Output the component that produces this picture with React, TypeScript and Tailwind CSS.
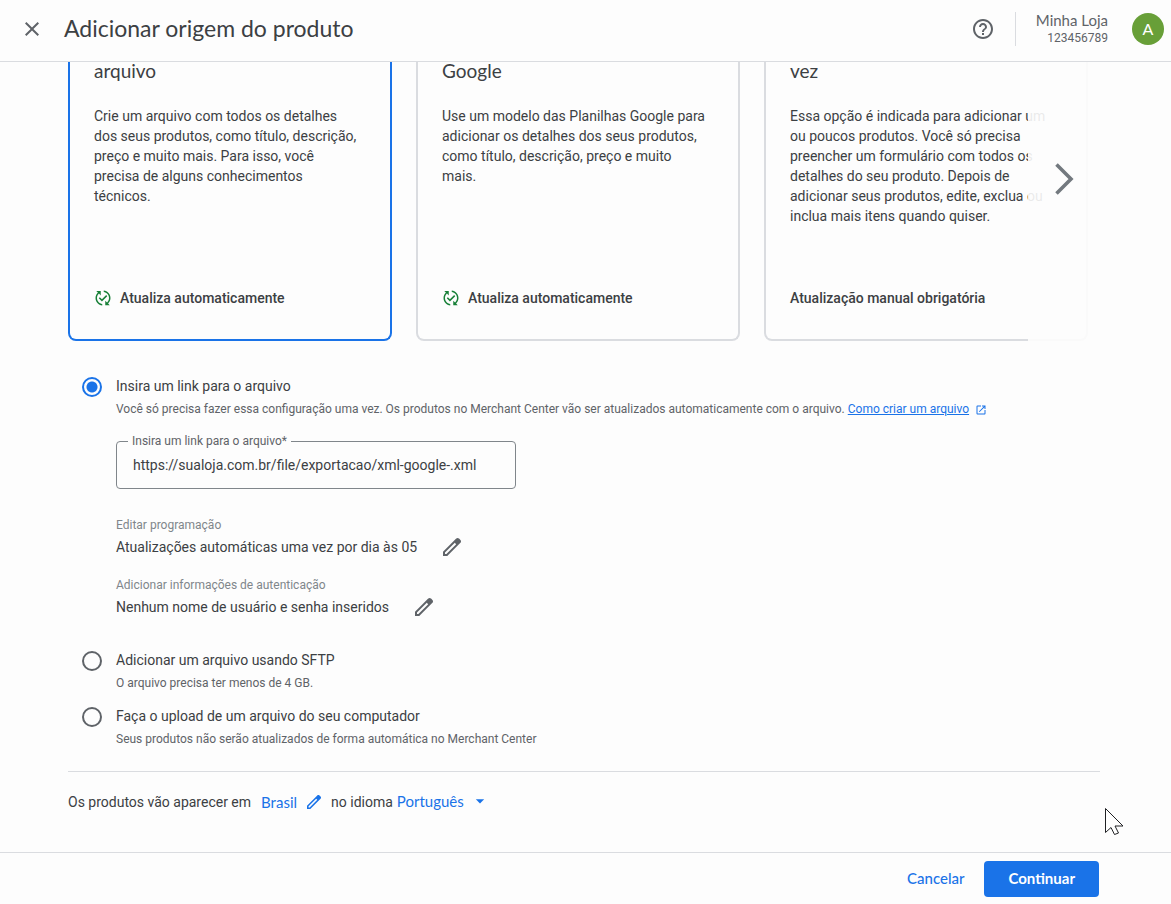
import React, { useState } from 'react';
import { MdArrowDropDown, MdClose, MdHelpOutline, MdOpenInNew, MdPublishedWithChanges } from 'react-icons/md';

type Source = 'link' | 'sftp' | 'upload';

interface CardProps {
  title: string;
  text: string;
  status: string;
  auto?: boolean;
  selected?: boolean;
}

const PencilIcon: React.FC<{ className: string }> = ({ className }) => (
  <svg viewBox="120 -840 720 720" fill="currentColor" className={className} aria-hidden="true">
    <path d="M200-200h57l391-391-57-57-391 391v57Zm-80 80v-170l528-527q12-11 26.5-17t30.5-6q16 0 31 6t26 18l55 56q12 11 17.5 26t5.5 30q0 16-5.5 30.5T817-647L290-120H120Zm640-584-56-56 56 56Zm-141 85-28-29 57 57-29-28Z" />
  </svg>
);

const MethodCard: React.FC<CardProps> = ({ title, text, status, auto, selected }) => (
  <article
    className={`flex w-[324px] shrink-0 flex-col rounded-b-lg border-2 border-t-0 px-6 pb-[31px] ${
      selected ? 'border-[#1a73e8]' : 'border-[#dadce0]'
    }`}
  >
    <h2 className="font-['Lato'] text-[19px] leading-[18px] text-[#3c4043]">{title}</h2>
    <p className="mt-[26px] text-sm leading-5 whitespace-pre-line">{text}</p>
    <div className="mt-auto flex items-center gap-2 pt-[62px] text-sm leading-5 font-medium">
      {auto && <MdPublishedWithChanges className="size-[18px] text-[#188038]" />}
      {status}
    </div>
  </article>
);

interface OptionProps {
  id: Source;
  label: string;
  hint: React.ReactNode;
  value: Source;
  onSelect: (value: Source) => void;
  children?: React.ReactNode;
}

const SourceOption: React.FC<OptionProps> = ({ id, label, hint, value, onSelect, children }) => (
  <div className="flex gap-3.5">
    <input
      type="radio"
      id={id}
      name="source"
      checked={value === id}
      onChange={() => onSelect(id)}
      className="mt-px size-5 shrink-0 appearance-none rounded-full border-2 border-[#5f6368] checked:border-[#1a73e8] checked:bg-[radial-gradient(circle,#1a73e8_5px,transparent_6px)]"
    />
    <div className="flex-1">
      <label htmlFor={id} className="block text-sm leading-5">{label}</label>
      <div className="mt-[3px] text-xs leading-5 text-[#5f6368]">{hint}</div>
      {children}
    </div>
  </div>
);

const Setting: React.FC<{ name: string; value: string }> = ({ name, value }) => (
  <div>
    <div className="text-xs leading-5 text-[#80868b]">{name}</div>
    <div className="flex items-center gap-[26px] text-sm leading-6">
      {value}
      <button type="button" aria-label={name} className="text-[#5f6368]">
        <PencilIcon className="size-[18px]" />
      </button>
    </div>
  </div>
);

const App: React.FC = () => {
  const [source, setSource] = useState<Source>('link');
  const [url, setUrl] = useState('https://sualoja.com.br/file/exportacao/xml-google-.xml');

  return (
    <div className="relative flex min-h-screen flex-col bg-[#fdfdfd] font-['Roboto',sans-serif] text-[#3c4043]">
      <header className="flex h-[62px] shrink-0 items-center border-b border-[#dadce0] pr-[7px] pb-1 pl-5">
        <button type="button" aria-label="Fechar" className="text-[#5f6368]">
          <MdClose className="size-6" />
        </button>
        <h1 className="ml-5 flex-1 pb-0.5 font-['Lato'] text-[23px] leading-8">Adicionar origem do produto</h1>
        <button type="button" aria-label="Ajuda" className="mr-5 text-[#5f6368]">
          <MdHelpOutline className="size-6" />
        </button>
        <div className="border-l border-[#dadce0] pl-5 text-right text-[#5f6368]">
          <div className="font-['Lato'] text-[15px] leading-4">Minha Loja</div>
          <div className="pt-0.5 text-xs leading-4">123456789</div>
        </div>
        <button type="button" aria-label="Conta" className="ml-6 size-8 rounded-full bg-[#689f38] font-['Lato'] text-base text-white">
          A
        </button>
      </header>

      <main className="flex-1 pr-[71px] pl-[68px]">
        <section className="relative flex gap-6">
          <MethodCard
            selected
            auto
            title="arquivo"
            text={'Crie um arquivo com todos os detalhes\ndos seus produtos, como título, descrição,\npreço e muito mais. Para isso, você\nprecisa de alguns conhecimentos\ntécnicos.'}
            status="Atualiza automaticamente"
          />
          <MethodCard
            auto
            title="Google"
            text={'Use um modelo das Planilhas Google para\nadicionar os detalhes dos seus produtos,\ncomo título, descrição, preço e muito\nmais.'}
            status="Atualiza automaticamente"
          />
          <MethodCard
            title="vez"
            text={'Essa opção é indicada para adicionar um\nou poucos produtos. Você só precisa\npreencher um formulário com todos os\ndetalhes do seu produto. Depois de\nadicionar seus produtos, edite, exclua ou\ninclua mais itens quando quiser.'}
            status="Atualização manual obrigatória"
          />
          <button
            type="button"
            aria-label="Próximo"
            className="absolute inset-y-0 right-0 flex w-[72px] justify-center bg-[#fdfdfd]/90 pt-[101px] text-[#73797f]"
          >
            <svg viewBox="0 0 20 32" className="h-8 w-5" fill="none" stroke="currentColor" strokeWidth="3.6" aria-hidden="true">
              <path d="M2.5 1.5 17 16 2.5 30.5" />
            </svg>
          </button>
        </section>

        <form id="source-form" className="mt-[35px] flex flex-col gap-[13px] pl-3.5" onSubmit={(e) => e.preventDefault()}>
          <SourceOption
            id="link"
            label="Insira um link para o arquivo"
            value={source}
            onSelect={setSource}
            hint={
              <>
                Você só precisa fazer essa configuração uma vez. Os produtos no Merchant Center vão ser atualizados automaticamente com o arquivo.{' '}
                <a href="#como-criar" className="text-[#1a73e8] underline">Como criar um arquivo</a>
                <MdOpenInNew className="ml-1.5 inline size-3 text-[#1a73e8]" />
              </>
            }
          >
            <div className="relative mt-[22px] w-[400px]">
              <label htmlFor="file-url" className="absolute -top-2 left-3 bg-[#fdfdfd] px-1 text-xs leading-4 text-[#5f6368]">
                Insira um link para o arquivo*
              </label>
              <input
                id="file-url"
                type="text"
                required
                value={url}
                onChange={(e) => setUrl(e.target.value)}
                className="h-12 w-full rounded border border-[#80868b] bg-transparent px-4 text-sm outline-none"
              />
            </div>
            <div className="mt-[26px] mb-[18px] flex flex-col gap-4">
              <Setting name="Editar programação" value="Atualizações automáticas uma vez por dia às 05" />
              <Setting name="Adicionar informações de autenticação" value="Nenhum nome de usuário e senha inseridos" />
            </div>
          </SourceOption>
          <SourceOption
            id="sftp"
            label="Adicionar um arquivo usando SFTP"
            hint="O arquivo precisa ter menos de 4 GB."
            value={source}
            onSelect={setSource}
          />
          <SourceOption
            id="upload"
            label="Faça o upload de um arquivo do seu computador"
            hint="Seus produtos não serão atualizados de forma automática no Merchant Center"
            value={source}
            onSelect={setSource}
          />
        </form>

        <div className="mt-[22px] flex items-center border-t border-[#dadce0] pt-[19px] text-sm leading-5">
          <span>Os produtos vão aparecer em</span>
          <button type="button" className="ml-2.5 flex items-center gap-2.5 font-['Lato'] text-[15px] text-[#1a73e8]">
            Brasil
            <PencilIcon className="size-3.5" />
          </button>
          <label htmlFor="language" className="ml-2.5">no idioma</label>
          <div className="relative ml-1 text-[#1a73e8]">
            <select id="language" className="appearance-none bg-transparent pr-[26px] font-['Lato'] text-[15px] outline-none">
              <option>Português</option>
            </select>
            <MdArrowDropDown className="pointer-events-none absolute top-0 right-0 size-5" />
          </div>
        </div>
      </main>

      <footer className="flex h-[52px] shrink-0 items-center justify-end gap-5 border-t border-[#dadce0] pr-[72px]">
        <button type="button" className="font-['Lato'] text-[15px] font-medium text-[#1a73e8]">Cancelar</button>
        <button type="submit" form="source-form" className="h-9 rounded bg-[#1a73e8] px-6 font-['Lato'] text-[15px] font-bold text-white">
          Continuar
        </button>
      </footer>

      <svg viewBox="0 0 19 28" className="pointer-events-none absolute top-[808px] left-[1105px] h-7 w-[19px]" aria-hidden="true">
        <path d="M.5.5v24l5.5-5 3.5 7 4-1.5-3.5-7h8Z" fill="#fff" stroke="#202124" />
      </svg>
    </div>
  );
};

export default App;
